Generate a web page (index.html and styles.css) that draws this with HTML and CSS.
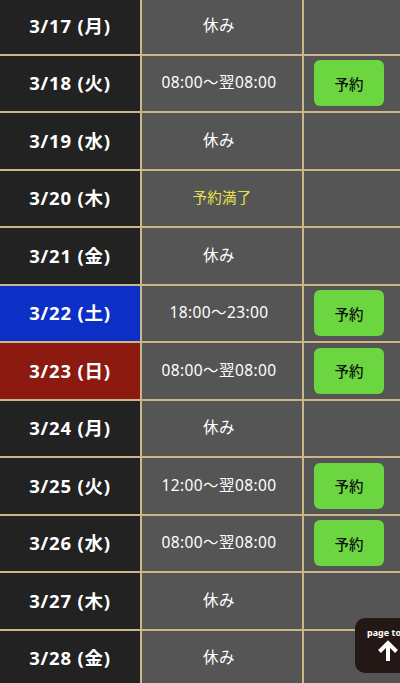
FILE: index.html
```html
<!DOCTYPE html>
<html lang="ja">
<head>
<meta charset="utf-8">
<title>Schedule</title>
<link rel="stylesheet" href="styles.css">
</head>
<body>
<div class="schedule">
  <div class="row"><div class="date">3/17 (月)</div><div class="hours">休み</div><div class="action"></div></div>
  <div class="row"><div class="date">3/18 (火)</div><div class="hours">08:00〜翌08:00</div><div class="action"><a class="reserve">予約</a></div></div>
  <div class="row"><div class="date">3/19 (水)</div><div class="hours">休み</div><div class="action"></div></div>
  <div class="row"><div class="date">3/20 (木)</div><div class="hours full">予約満了</div><div class="action"></div></div>
  <div class="row"><div class="date">3/21 (金)</div><div class="hours">休み</div><div class="action"></div></div>
  <div class="row"><div class="date sat">3/22 (土)</div><div class="hours">18:00〜23:00</div><div class="action"><a class="reserve">予約</a></div></div>
  <div class="row"><div class="date sun">3/23 (日)</div><div class="hours">08:00〜翌08:00</div><div class="action"><a class="reserve">予約</a></div></div>
  <div class="row"><div class="date">3/24 (月)</div><div class="hours">休み</div><div class="action"></div></div>
  <div class="row"><div class="date">3/25 (火)</div><div class="hours">12:00〜翌08:00</div><div class="action"><a class="reserve">予約</a></div></div>
  <div class="row"><div class="date">3/26 (水)</div><div class="hours">08:00〜翌08:00</div><div class="action"><a class="reserve">予約</a></div></div>
  <div class="row"><div class="date">3/27 (木)</div><div class="hours">休み</div><div class="action"></div></div>
  <div class="row"><div class="date">3/28 (金)</div><div class="hours">休み</div><div class="action"></div></div>
</div>
<a class="pagetop">
  <span class="pagetop-label">page top</span>
  <svg class="pagetop-arrow" viewBox="0 0 24 24" width="24" height="24" aria-hidden="true">
    <path d="M12 22 V5 M3.5 12.5 L12 4 L20.5 12.5" fill="none" stroke="#fff" stroke-width="4" stroke-linecap="butt" stroke-linejoin="miter"/>
  </svg>
</a>
</body>
</html>
```

FILE: styles.css
```css
* { box-sizing: border-box; }
html, body {
  margin: 0;
  padding: 0;
  background: #555;
  font-family: "Noto Sans", "Noto Sans CJK JP", sans-serif;
  overflow: hidden;
}
.schedule {
  display: flex;
  flex-direction: column;
  margin-top: -2px;
}
.row {
  display: grid;
  grid-template-columns: 140px 162px 1fr;
  height: 57.5px;
  border-bottom: 2px solid #cbb687;
}
.date {
  background: #222;
  color: #fff;
  font-family: "Noto Sans", "Noto Sans CJK JP", sans-serif;
  font-weight: 700;
  font-size: 18.5px;
  letter-spacing: 0.8px;
  display: flex;
  align-items: center;
  justify-content: center;
  padding-bottom: 2px;
}
.date.sat { background: #0c2fc6; }
.date.sun { background: #8c1a10; }
.hours {
  background: #555;
  border-left: 2px solid #cbb687;
  color: #fff;
  font-size: 15.5px;
  letter-spacing: 0.4px;
  display: flex;
  align-items: center;
  justify-content: center;
  padding-right: 6px;
  padding-bottom: 3px;
}
.hours.full {
  color: #e8e24a;
  font-family: "Noto Sans CJK JP", sans-serif;
  font-size: 14.5px;
  letter-spacing: 0.3px;
  padding-right: 0;
}
.action {
  background: #555;
  border-left: 2px solid #cbb687;
  display: flex;
  align-items: center;
  justify-content: flex-start;
  padding-left: 10px;
}
.reserve {
  display: flex;
  align-items: center;
  justify-content: center;
  width: 70px;
  height: 46px;
  background: #6bd63f;
  border-radius: 6px;
  color: #111;
  font-family: "Noto Sans CJK JP", sans-serif;
  font-size: 14.5px;
  font-weight: 500;
  text-decoration: none;
}
.pagetop {
  position: fixed;
  left: 355px;
  top: 618px;
  width: 64px;
  height: 55px;
  background: #231815;
  border-radius: 10px;
  display: flex;
  flex-direction: column;
  align-items: flex-start;
  padding: 9px 0 0 12px;
  gap: 1px;
  text-decoration: none;
}
.pagetop-label {
  color: #fff;
  font-family: "Noto Sans", sans-serif;
  font-weight: 700;
  font-size: 9px;
  line-height: 11px;
  white-space: nowrap;
}
.pagetop-arrow {
  display: block;
  margin-left: 9px;
}
```
